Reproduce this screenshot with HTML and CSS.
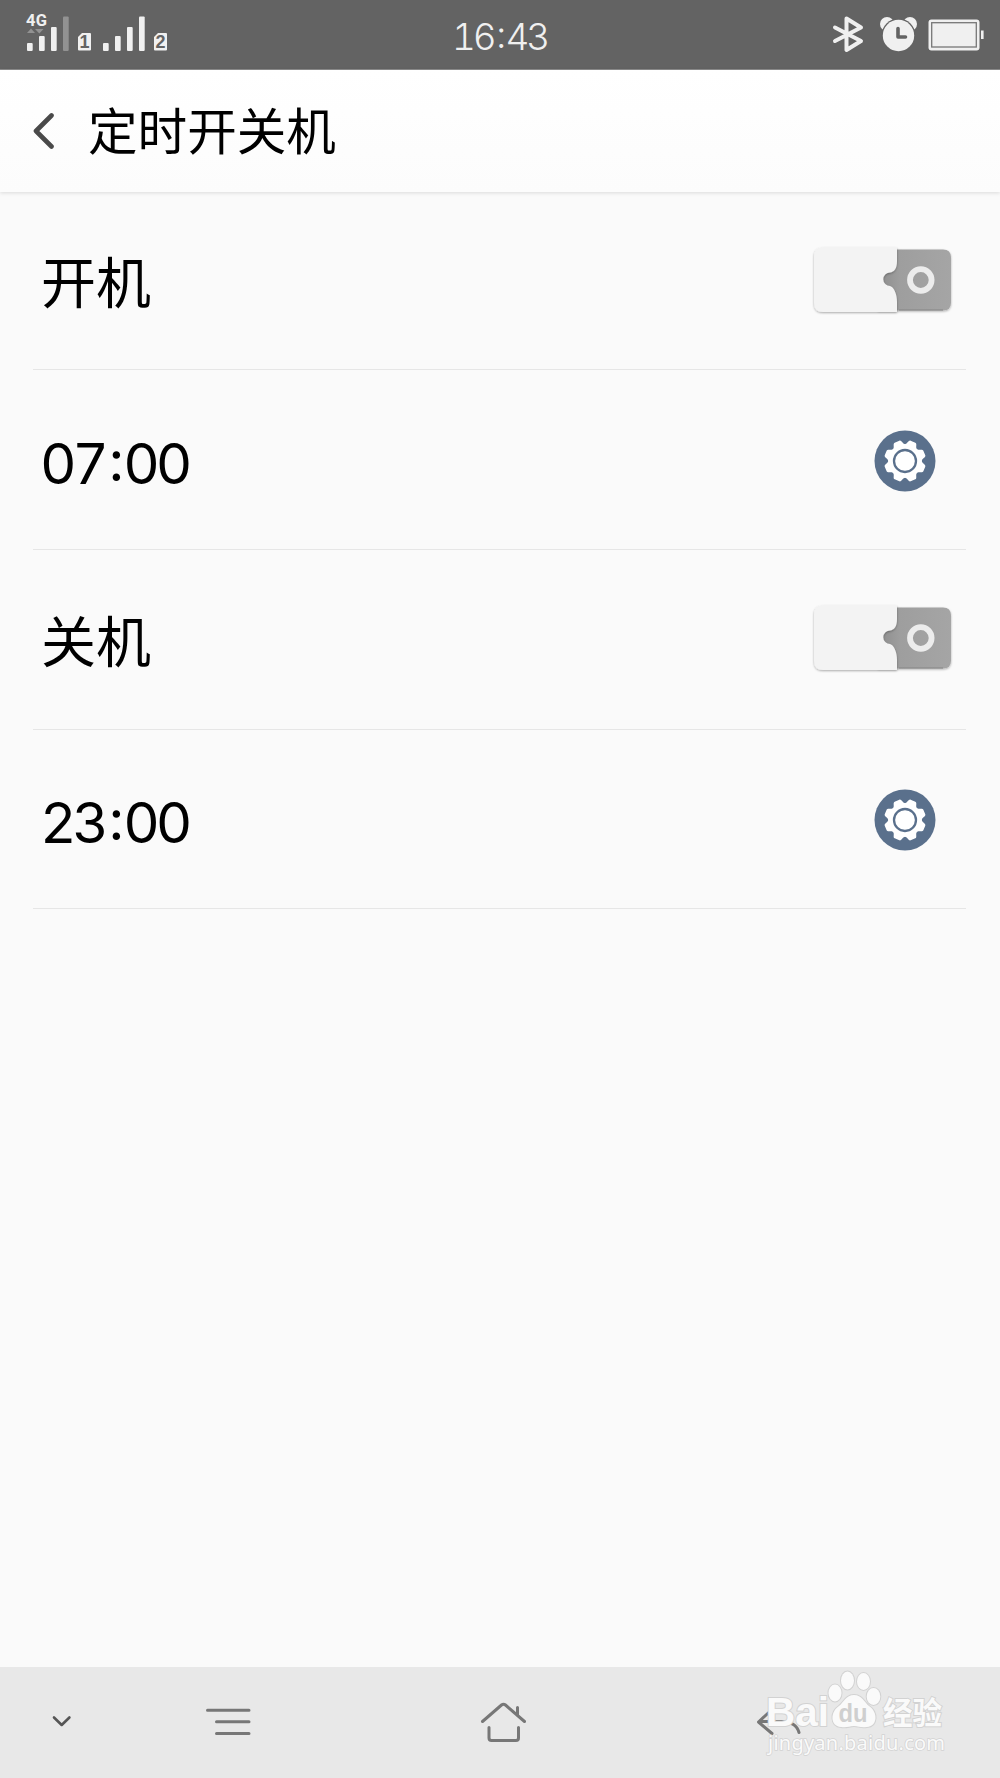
FILE: index.html
```html
<!DOCTYPE html>
<html lang="zh-CN">
<head>
<meta charset="utf-8">
<title>定时开关机</title>
<link rel="stylesheet" href="styles.css">
</head>
<body>
<div class="screen">
  <div class="status">
    <svg class="signals" width="170" height="70" viewBox="0 0 170 70">
      <text x="26" y="25.500" class="net" textLength="21">4G</text>
      <path d="M27 33l4-4.500 4 4.500zM35 29h8.500l-4.200 4.500z" fill="#929292"/>
      <g fill="#f0f0f0">
        <rect x="27" y="43" width="5.700" height="8" rx="1"/><rect x="39" y="36" width="5.700" height="15" rx="1"/>
        <rect x="51" y="27" width="5.700" height="24" rx="1"/>
        <rect x="103" y="43" width="5.700" height="8" rx="1"/><rect x="115" y="36" width="5.700" height="15" rx="1"/>
        <rect x="127" y="27" width="5.700" height="24" rx="1"/><rect x="139" y="16.500" width="5.700" height="34.500" rx="1"/>
        <path d="M82 33h8q1 0 1 1v15.500q0 1-1 1H79q-1 0-1-1V37zM158 33h8q1 0 1 1v15.500q0 1-1 1h-11q-1 0-1-1V37z"/>
      </g>
      <rect x="63" y="16.500" width="5.700" height="34.500" rx="1" fill="#929292"/>
      <text x="84.500" y="48" class="sim">1</text>
      <text x="160.500" y="48" class="sim">2</text>
    </svg>
    <div class="clock">16<span>:</span>43</div>
    <svg class="indicators" width="170" height="70" viewBox="830 0 170 70">
      <path d="M835 27.500l26 13.500-14.500 9V18.500l14.500 9-26 13.500" fill="none" stroke="#f0f0f0" stroke-width="4" stroke-linejoin="round" stroke-linecap="round"/>
      <g fill="#f0f0f0">
        <circle cx="887" cy="24" r="7"/><circle cx="910" cy="24" r="7"/>
      </g>
      <circle cx="898.500" cy="35.500" r="17" fill="#636363"/>
      <circle cx="898.500" cy="35.500" r="15.700" fill="#f0f0f0"/>
      <path d="M898 28.500v8.500h7.500" fill="none" stroke="#636363" stroke-width="3.600" stroke-linecap="round" stroke-linejoin="round"/>
      <rect x="928.500" y="19.500" width="51" height="31" rx="3" fill="#f0f0f0"/>
      <rect x="931.700" y="22.700" width="44.600" height="24.300" fill="#f0f0f0" stroke="#777" stroke-width="1.300"/>
      <rect x="981" y="30.500" width="2.600" height="8.500" fill="#f0f0f0"/>
    </svg>
  </div>
  <header class="header">
    <svg width="22" height="38" viewBox="0 0 22 38"><path d="M18.500 3.500L3 19 18.500 34.500" fill="none" stroke="#4a4a4a" stroke-width="4.600" stroke-linecap="round" stroke-linejoin="round"/></svg>
    <h1 class="title">定时开关机</h1>
  </header>
  <svg class="defs" width="0" height="0">
    <defs>
      <linearGradient id="track" x1="0" x2="1"><stop offset="0" stop-color="#8c8c8c"/><stop offset=".3" stop-color="#9e9e9e"/><stop offset="1" stop-color="#a5a5a5"/></linearGradient>
      <filter id="soft" x="-10%" y="-10%" width="120%" height="130%"><feDropShadow dx="0" dy="1" stdDeviation="1" flood-opacity=".32"/></filter>
      <symbol id="switch" viewBox="0 0 150 80">
        <path d="M78 8.500h65q8 0 8 8v45q0 8-8 8H78z" transform="translate(-3 0)" fill="url(#track)" filter="url(#soft)"/>
        <path d="M96 69h44" stroke="#858585" stroke-width="1"/>
        <path d="M20 6.500H94V20C94 28 91 31 87 31.500A6.700 6.700 0 0 0 87 45C91 46 94 53 94 61V71H20q-9 0-9-9V15.500q0-9 9-9z" fill="#f3f3f3" filter="url(#soft)"/>
        <circle cx="117.800" cy="39" r="10.800" fill="none" stroke="#ececec" stroke-width="5.800"/>
      </symbol>
      <symbol id="gear" viewBox="-32 -32 64 64">
        <circle r="30.500" fill="#5a708c"/>
        <g fill="#fff">
          <circle r="16.800"/>
          <path id="tooth" d="M-7-15C-4-16.500-5-20.800-2.500-20.900H2.500C5-20.800 4-16.500 7-15z" transform="rotate(22.500)"/>
          <use href="#tooth" transform="rotate(45)"/><use href="#tooth" transform="rotate(90)"/><use href="#tooth" transform="rotate(135)"/>
          <use href="#tooth" transform="rotate(180)"/><use href="#tooth" transform="rotate(225)"/><use href="#tooth" transform="rotate(270)"/><use href="#tooth" transform="rotate(315)"/>
        </g>
        <circle r="11" fill="#fff" stroke="#5a708c" stroke-width="2.300"/>
      </symbol>
    </defs>
  </svg>
  <main class="list">
    <div class="row first"><span class="label">开机</span><svg class="switch"><use href="#switch"/></svg></div>
    <div class="row timer"><span class="time">07<span>:</span>00</span><svg class="gear"><use href="#gear"/></svg></div>
    <div class="row"><span class="label">关机</span><svg class="switch"><use href="#switch"/></svg></div>
    <div class="row timer"><span class="time">23<span>:</span>00</span><svg class="gear"><use href="#gear"/></svg></div>
  </main>
  <nav class="nav">
    <svg width="1000" height="111" viewBox="0 1667 1000 111">
      <g fill="none" stroke="#777" stroke-width="3" stroke-linecap="round" stroke-linejoin="round">
        <path d="M54 1717.500l7.700 7.500 7.700-7.500" stroke="#555" stroke-width="2.600"/>
        <path d="M207.500 1710.300H249M216.500 1721.800H249M216.500 1733.500H249"/>
        <path d="M482.500 1721.500L501.500 1705q2-1.600 4 0L524.500 1721.500M517.500 1707.500v7M489 1727.500v10.500q0 2.500 2.500 2.500h24.500q2.500 0 2.500-2.500V1727.500"/>
        <path d="M772 1709.500l-13.500 12.500 13.500 11.500M759 1721.500h22q15 0 18 11"/>
      </g>
      <g class="mark">
        <text x="766" y="1726" class="brand" textLength="63" lengthAdjust="spacingAndGlyphs">Bai</text>
        <ellipse cx="835" cy="1693" rx="6.500" ry="8.500"/><ellipse cx="847.500" cy="1680.500" rx="6.500" ry="9"/>
        <ellipse cx="863.500" cy="1681.500" rx="6.500" ry="8.500"/><ellipse cx="873.500" cy="1696.500" rx="6.800" ry="8.500"/>
        <path d="M854 1695C862 1695 864 1702 869 1706C878 1712 878 1726 867 1727C860 1728 859 1726 854 1726C849 1726 847 1728 841 1727C830 1726 830 1712 839 1706C844 1702 846 1695 854 1695z"/>
        <text x="883" y="1724" class="brand cjk" textLength="59" lengthAdjust="spacingAndGlyphs">经验</text>
        <text x="768" y="1750" class="site" textLength="177">jingyan.baidu.com</text>
      </g>
      <text x="838.500" y="1722" class="du" textLength="29" lengthAdjust="spacingAndGlyphs">du</text>
    </svg>
  </nav>
</div>
</body>
</html>
```
FILE: styles.css
```css
body { margin: 0; }
svg { display: block; flex: none; }
.screen {
  display: flex;
  flex-direction: column;
  width: 1000px;
  height: 1778px;
  background: #fafafa;
  color: #000;
  font-family: Inter, "Noto Sans CJK SC", sans-serif;
  font-optical-sizing: none;
}
.status {
  box-sizing: border-box;
  display: flex;
  justify-content: space-between;
  height: 70px;
  background: #636363;
  border-bottom: 1px solid #8c8c8c;
}
.clock {
  padding-right: 1px;
  font-size: 37px;
  font-weight: 300;
  font-variant-numeric: tabular-nums;
  line-height: 73px;
  letter-spacing: -3.200px;
  color: #f0f0f0;
}
.clock span, .time span {
  display: inline-block;
  width: .3em;
  margin: 0 .01em 0 .02em;
  transform: translateY(-.05em);
  font-variant-numeric: normal;
  text-align: center;
}
.net { font: 700 16.500px Roboto, sans-serif; fill: #f0f0f0; }
.sim { font: 700 18px "Liberation Sans", sans-serif; fill: #636363; text-anchor: middle; }
.header {
  box-sizing: border-box;
  display: flex;
  align-items: center;
  gap: 33px;
  height: 122px;
  padding-left: 33px;
  background: linear-gradient(#fff, #fcfcfc);
  box-shadow: 0 1px 4px rgba(0, 0, 0, .13);
}
.title {
  margin: 0;
  padding-bottom: 7px;
  font: 400 49.600px/60px "Noto Sans CJK SC", sans-serif;
}
.defs { position: absolute; }
.list { flex: 1; padding: 0 34px 0 33px; }
.row {
  box-sizing: border-box;
  display: flex;
  align-items: center;
  justify-content: space-between;
  height: 179.600px;
  padding: 0 13px 0 8px;
  border-bottom: 1px solid #e6e6e6;
}
.first { height: 178.400px; }
.timer { padding: 3px 29px 0 7px; }
.label { padding-bottom: 3px; font: 400 55px/70px "Noto Sans CJK SC", sans-serif; }
.time { padding-top: 5px; font-size: 56.500px; font-weight: 400; font-variant-numeric: tabular-nums; line-height: 70px; letter-spacing: -4.300px; }
.switch { width: 150px; height: 80px; }
.gear { width: 64px; height: 64px; }
.nav { height: 111px; background: #e8e8e8; }
.mark { fill: #fafafa; stroke: #d2d2d2; stroke-width: 2px; paint-order: stroke; }
.brand { font: 700 41px "Liberation Sans", sans-serif; }
.cjk { font: 700 31px "Noto Sans CJK SC", sans-serif; }
.site { font: 400 20px "Noto Sans", sans-serif; stroke-width: 1.500px; }
.du { font: 700 26px "Liberation Sans", sans-serif; fill: #cfcfcf; }
```
